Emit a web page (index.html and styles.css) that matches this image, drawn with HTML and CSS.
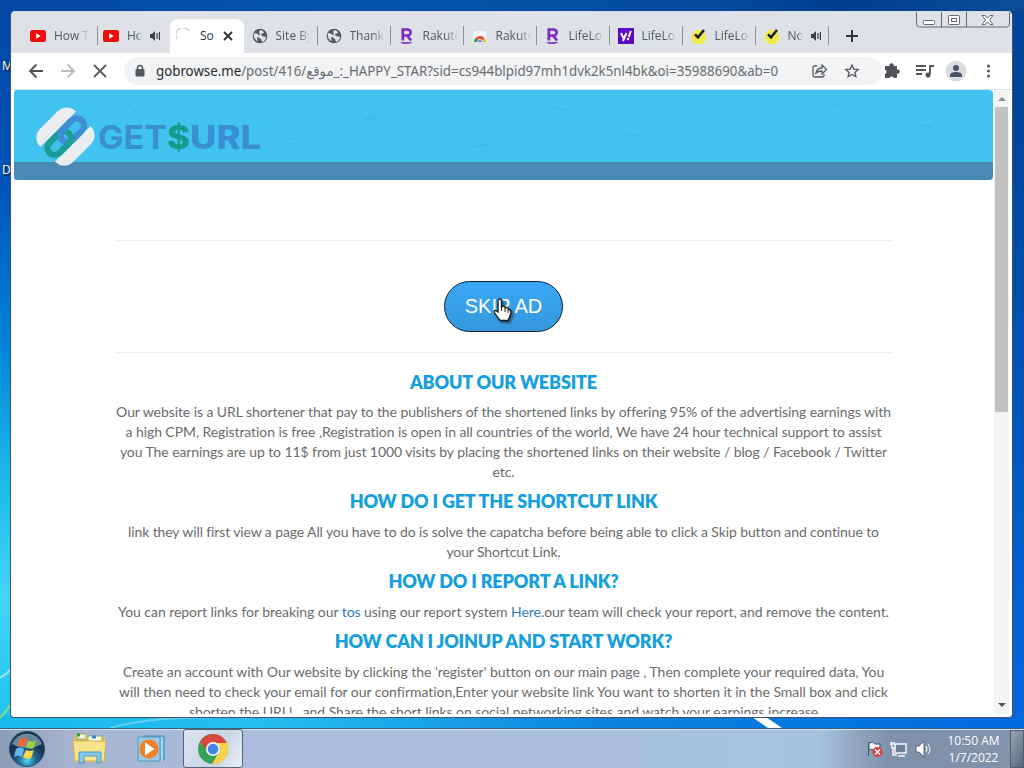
FILE: index.html
```
<!DOCTYPE html>
<html lang="en"><head><meta charset="utf-8"><title>Desktop</title><link rel="stylesheet" href="styles.css"></head>
<body>
<svg class="defs" width="0" height="0"><defs>
<symbol id="yt" viewBox="0 0 16 16"><rect y="2" width="16" height="12" rx="2.5" fill="#f20d0d"/><path d="M6.2 5.3v5.4l4.5-2.7z" fill="#fff"/></symbol>
<symbol id="globe" viewBox="0 0 16 16"><circle cx="8" cy="8" r="7.3" fill="#565a5e"/><path d="M2 5l4 1 1 2-2 2 1 3c-3-1-5-4-4-8zM8 2l3 1 1 2-3 1 1 2 4 1c0 2-2 5-4 5l-1-3-3-2 2-3-1-2z" fill="#dee1e6"/></symbol>
<symbol id="rak" viewBox="0 0 16 16"><path d="M3.8 12.500V1.500h4.700a3 3 0 0 1 .2 6H4m4 0l4 5" fill="none" stroke="#7e28c7" stroke-width="2.700"/><path d="M1 14h13l-4 2H4z" fill="#8b45ce"/></symbol>
<symbol id="store" viewBox="0 0 16 16"><path d="M2 3h12l1 11H1z" fill="#f5f5f5"/><path d="M2 14a6 6 0 0 1 12 0h-3a3 3 0 0 0-6 0z" fill="#e04c40"/><path d="M2 14a6 6 0 0 1 2-4l2 2-1 2z" fill="#34a853"/><path d="M12 10a6 6 0 0 1 2 4h-4z" fill="#fbc02d"/><path d="M6 14a2 2 0 0 1 4 0z" fill="#4285f4"/></symbol>
<symbol id="yahoo" viewBox="0 0 16 16"><path d="M0 0h16v16H0z" fill="#5b0bc5"/><path d="M3 5l2.4 5M8.500 5L5 13M12.800 3l-2 6" fill="none" stroke="#fff" stroke-width="2"/><circle cx="10" cy="11" r="1.200" fill="#fff"/></symbol>
<symbol id="check" viewBox="0 0 16 16"><circle cx="8" cy="9" r="7.300" fill="#f2ea4a"/><path d="M4 6.300l3 3L13 2" fill="none" stroke="#18202a" stroke-width="2.600"/></symbol>
<symbol id="sound" viewBox="0 0 12 12"><path d="M1 4h2l3-3v10L3 8H1z" fill="#3c4043"/><path d="M8 3v6M10.400 2v8" stroke="#3c4043" stroke-width="1.200"/></symbol>
</defs></svg>
<div class="desktop">
<span class="desk-label label-m">M</span><span class="desk-label label-d">D</span>
<svg class="streaks" width="1024" height="728"><path d="M0 678Q7 674 12 668" stroke="#c8f2fa" stroke-width="2" fill="none" opacity=".7"/><path d="M0 718Q6 712 12 702" stroke="#9ce567" stroke-width="2" fill="none" opacity=".75"/><path d="M110 728Q150 716 230 717" stroke="#9fe3ef" stroke-width="2" fill="none" opacity=".5"/><path d="M752 717h14l16 11h-14z" fill="#fff"/></svg>
<main class="window">
<div class="controls"><svg width="94" height="17" fill="none" stroke="#646970"><path d="M.5 0v13q0 3 3 3h87q3 0 3-3V0M25.500 0v16M50.500 0v16"/><g fill="#fff"><rect x="7.500" y="9.500" width="11" height="4" rx="1"/><rect x="32.500" y="4.500" width="11" height="9" rx="1"/><rect x="35.500" y="7.500" width="5" height="3"/><path d="M66 4.500h3l2.500 2.700L74 4.500h3L73.500 9l3.500 4.500h-3l-2.500-2.700-2.500 2.700h-3L69.500 9z"/></g></svg></div>
<nav class="tabs">
<div class="tab"><svg class="fav"><use href="#yt"/></svg><span>How T</span></div>
<div class="tab short before-active"><svg class="fav"><use href="#yt"/></svg><span>Ho</span><svg class="snd"><use href="#sound"/></svg></div>
<div class="tab short active"><svg class="fav" viewBox="0 0 16 16"><path d="M1 11A7.200 7.200 0 0 1 13 3" fill="none" stroke="#ced4dc" stroke-width="1.500"/></svg><span>So</span><svg class="snd" viewBox="0 0 12 12"><path d="M2 2l8 8M10 2l-8 8" stroke="#303338" stroke-width="1.900"/></svg></div>
<div class="tab"><svg class="fav"><use href="#globe"/></svg><span>Site By</span></div>
<div class="tab"><svg class="fav"><use href="#globe"/></svg><span>Thank</span></div>
<div class="tab"><svg class="fav"><use href="#rak"/></svg><span>Rakute</span></div>
<div class="tab"><svg class="fav"><use href="#store"/></svg><span>Rakute</span></div>
<div class="tab"><svg class="fav"><use href="#rak"/></svg><span>LifeLo</span></div>
<div class="tab"><svg class="fav"><use href="#yahoo"/></svg><span>LifeLo</span></div>
<div class="tab"><svg class="fav"><use href="#check"/></svg><span>LifeLo</span></div>
<div class="tab short"><svg class="fav"><use href="#check"/></svg><span>No</span><svg class="snd"><use href="#sound"/></svg></div>
<svg class="plus" width="14" height="14"><path d="M7 1v12M1 7h12" stroke="#303338" stroke-width="2"/></svg>
</nav>
<div class="toolbar">
<svg class="navs" width="112" height="36" fill="none" stroke-width="1.800"><path d="M31 18H18M24.500 11.500L18 18l6.500 6.500" stroke="#4d5156"/><path d="M49 18h13M55.500 11.500L62 18l-6.500 6.500" stroke="#babcbe"/><path d="M82 12l12 12M94 12L82 24" stroke="#55595d"/></svg>
<div class="omnibox">
<svg width="10" height="14"><path d="M2.500 6V4a2.500 2.500 0 0 1 5 0v2" fill="none" stroke="#55595e" stroke-width="1.500"/><rect x=".5" y="5" width="9" height="7.500" rx="1" fill="#55595e"/></svg>
<svg class="url" width="624" height="24"><text x="1" y="17" textLength="622" lengthAdjust="spacingAndGlyphs"><tspan fill="#292b2f">gobrowse.me</tspan>/post/416/موقع_:_HAPPY_STAR?sid=cs944blpid97mh1dvk2k5nl4bk&amp;oi=35988690&amp;ab=0</text></svg>
<svg class="share" width="48" height="18" fill="none" stroke="#55595e" stroke-width="1.300"><path d="M5 4H2.500Q1 4 1 5.500v8Q1 15 2.500 15h8q1.500 0 1.500-1.500V12M4 11q1-5 6-5V3l4.500 4.500L10 12V9q-4 0-6 2z"/><path d="M40 3l1.800 4.100 4.400.4-3.300 2.900 1 4.300-3.900-2.300-3.900 2.300 1-4.300-3.300-2.900 4.400-.4z"/></svg>
</div>
<svg class="actions" width="126" height="36"><path d="M4 13h3.500a2.200 2.200 0 1 1 4.200 0H15v3.500a2.200 2.200 0 1 1 0 4.200V25h-3.300a2.200 2.200 0 0 0-4.200 0H3v-4a2.200 2.200 0 0 0 0-4.200V13z" fill="#505459"/><path d="M34 13h10M34 17h10M34 21h6M48 12v9M48 13h4" stroke="#505459" stroke-width="1.800"/><circle cx="46" cy="22" r="2.500" fill="#505459"/><circle cx="74" cy="18" r="10.500" fill="#dadde2"/><circle cx="74" cy="15" r="3" fill="#4b5367"/><path d="M68 24v-2c0-4 12-4 12 0v2z" fill="#4b5367"/><g fill="#505459"><circle cx="106.500" cy="13" r="1.500"/><circle cx="106.500" cy="18" r="1.500"/><circle cx="106.500" cy="23" r="1.500"/></g></svg>
</div>
<div class="viewport">
<div class="page">
<header class="banner">
<svg width="979" height="90"><g fill="none" stroke="#229fcb" stroke-width="1" opacity=".4"><path d="M113 14l8 5M822 14l8 5M350 30l14-3M540 18l13 2M613 43l14 4M694 26l8-2M270 48l10 1M907 34l11 4M460 57l17-3"/></g>
<g transform="translate(51.500 46.500) rotate(45) scale(1.140)"><rect x="-20.500" y="-22" width="41" height="44" rx="11" fill="#e9edef"/><path d="M-9-23H9v46H-9z" fill="#40bfec"/><rect x="-6" y="-20" width="12.500" height="24" rx="6.250" fill="none" stroke="#3b8fd2" stroke-width="5.500"/><rect x="-6" y="-4" width="12.500" height="24" rx="6.250" fill="none" stroke="#1c9c94" stroke-width="5.500"/><path d="M-6-10v8q0 6 6 6" fill="none" stroke="#3b8fd2" stroke-width="5.500"/></g>
<g class="logo"><text x="84" y="59" textLength="69" lengthAdjust="spacingAndGlyphs">GET</text><text class="dollar" x="153" y="59" textLength="23" lengthAdjust="spacingAndGlyphs">$</text><text class="heavy" x="176" y="59" textLength="71" lengthAdjust="spacingAndGlyphs">URL</text></g></svg>
</header>
<div class="content">
<div class="ad"><button>SKIP AD<svg class="hand" width="19" height="25" viewBox="0 0 19 25"><path d="M5 14V3q0-2 1.800-2T8.500 3v6q3-2 4 1 3-1 3 1.500 2.500 0 2.500 3-1 4-3 8H7Q3 17 1 14q0-3 4 0z" fill="#fff" stroke="#171717" stroke-width="1.300"/><path d="M8.500 9v4M12 10v4M15 12v3" stroke="#222"/></svg></button></div>
<h2>ABOUT OUR WEBSITE</h2>
<p>Our website is a URL shortener that pay to the publishers of the shortened links by offering 95% of the advertising earnings with<br>a high CPM, Registration is free ,Registration is open in all countries of the world, We have 24 hour technical support to assist<br>you The earnings are up to 11$ from just 1000 visits by placing the shortened links on their website / blog / Facebook / Twitter<br>etc.</p>
<h2>HOW DO I GET THE SHORTCUT LINK</h2>
<p class="wide">link they will first view a page All you have to do is solve the capatcha before being able to click a Skip button and continue to<br>your Shortcut Link.</p>
<h2>HOW DO I REPORT A LINK?</h2>
<p class="loose">You can report links for breaking our <a>tos</a> using our report system <a>Here</a>.our team will check your report, and remove the content.</p>
<h2>HOW CAN I JOINUP AND START WORK?</h2>
<p class="loose">Create an account with Our website by clicking the 'register' button on our main page , Then complete your required data, You<br>will then need to check your email for our confirmation,Enter your website link You want to shorten it in the Small box and click<br>shorten the URL! , and Share the short links on social networking sites and watch your earnings increase</p>
</div></div>
<aside class="scrollbar"><i class="up"></i><div class="thumb"></div><i class="down"></i></aside>
</div>
</main>
<footer class="taskbar">
<svg class="start" width="38" height="38" viewBox="0 0 38 38"><defs><radialGradient id="orb" cy=".82"><stop stop-color="#4ed9f2"/><stop offset=".5" stop-color="#236895"/><stop offset="1" stop-color="#15334f"/></radialGradient></defs><circle cx="19" cy="19" r="17.500" fill="url(#orb)" stroke="#24506c"/><path d="M4 14a16 16 0 0 1 30 0Q19 22 4 14z" fill="#a7bfd0" opacity=".6"/><path d="M12 9q4-3 7 0l-2 8q-4-3-8 0z" fill="#ed6937"/><path d="M20 10q4 3 8 0l-2 8q-4 2-8-1z" fill="#9bcf4a"/><path d="M8 19q4-3 8 0l-2 8q-4-3-8 0z" fill="#63b9ed"/><path d="M18 20q4 2 8 0l-3 8q-4 2-8-1z" fill="#ffd447"/></svg>
<svg class="explorer" width="36" height="34"><path d="M2 5V2h8l2 3h21v25H2z" fill="#e3bd58"/><path d="M5 2h9v5H5zM16 4h14v7H16z" fill="#f5f6df" stroke="#9ab36c"/><path d="M1 9h33l-2 20H3z" fill="#f7e48f" stroke="#d4b250"/><path d="M7 31V20h22v11h-4v-7H12v7z" fill="#86c7e7" stroke="#4c98c4"/><path d="M5 3h3" stroke="#2b9c4b" stroke-width="3"/><path d="M20 5h4" stroke="#3b83ca" stroke-width="3"/></svg>
<svg class="media" width="30" height="30"><path d="M7 2h20v24H7z" fill="#73bdde" stroke="#3d8aaf"/><path d="M1 3h22v24H1z" fill="#9dc8e4" stroke="#4f96bd"/><path d="M25 3v24" stroke="#def4ff"/><circle cx="12" cy="15" r="9.500" fill="#ee8127"/><path d="M8 8.500v13l9.500-6.500z" fill="#fff"/></svg>
<div class="task-active"><svg width="32" height="32" viewBox="0 0 32 32"><circle cx="16" cy="16" r="15" fill="#35a456"/><path d="M3 8.500A15 15 0 0 1 29 8.500L30 11H16a6 6 0 0 0-5 8z" fill="#d8483e"/><path d="M16 10h14A15 15 0 0 1 15 31l7-12a6 6 0 0 0-6-9z" fill="#fbd04b"/><circle cx="16" cy="16" r="7" fill="#f5f6fa"/><circle cx="16" cy="16" r="5.300" fill="#4285e8"/></svg></div>
<svg class="tray" width="66" height="20" viewBox="0 0 66 20"><path d="M2.500 3v14M3 4q4-2 6 1h5v7H9q-3-3-6-1z" fill="#eef3f8" stroke="#4a5664"/><circle cx="11.500" cy="13" r="5" fill="#d43e3e"/><path d="M9 10.500l5 5m0-5l-5 5" stroke="#fff" stroke-width="1.500"/><path d="M29 5h11v9H29zM32 17h7M26 3v6h3M25 3v3M28 3v3M27 9v7h4" fill="#6f8094" stroke="#f6f8fa" stroke-width="1.500"/><path d="M50 7h3l5-5v16l-5-5h-3z" fill="#fff" stroke="#566574"/><path d="M60 7q2 3 0 6M62 5q4 5 0 10" fill="none" stroke="#fff"/></svg>
<div class="clock"><div>10:50 AM</div><div>1/7/2022</div></div><div class="show-desktop"></div>
</footer>
</div></body></html>
```
FILE: styles.css
```
*{box-sizing:border-box}
body{margin:0;overflow:hidden;font-family:"Noto Sans","DejaVu Sans",sans-serif}
.defs{position:absolute}
svg{display:block;flex:none}
.desktop{width:1024px;height:768px;position:relative;display:flex;flex-direction:column;padding:11px 0 0 10px;background:linear-gradient(#02479a 0,#024396 12%,#0054b8 50%,#0766db 93%,#0868e2);isolation:isolate}
.desktop:before{content:"";position:absolute;z-index:-1;inset:0;background:linear-gradient(90deg,#0348a3,#0353ad 35%,#034a9c 70%,#003d8e 82%,#0a4f94) 0 0/100% 11px no-repeat,linear-gradient(90deg,#17b8ec,#26bff0 25%,#0982de 60%,#0069df) 0 716px/100% 12px no-repeat,linear-gradient(#0547a5,#0054b7 25%,#0085d8 48%,#22bdec 68%,#43d4f6 82%,#20c0ed) 0 0/12px 728px no-repeat}
.streaks{position:absolute;inset:0;z-index:-1}
.desk-label{position:absolute;left:2px;color:#fff;font-size:12px;line-height:15px;text-shadow:1px 1px 2px #000;z-index:-1}
.label-m{top:58px}.label-d{top:162px}
.window{position:relative;width:1003px;height:707px;flex:none;background:#fff;border:1px solid #3e5470;border-top-color:#d3dce8;border-radius:5px 5px 4px 4px;padding-left:1px;overflow:hidden;margin-bottom:10px}
.controls{position:absolute;right:2px;top:-1px;z-index:2}
.tabs{height:41px;display:flex;align-items:flex-end;background:#dee1e6;padding-left:13px;margin-left:-1px}
.tab{position:relative;width:73.500px;height:34px;padding-left:6px;padding-top:8px;display:flex;gap:8px;flex:none;font-family:"Open Sans",sans-serif;font-size:12px;line-height:18px;color:#55585e}
.tab:nth-child(2){margin-left:-.5px}
.tab:nth-child(3){margin-left:-.5px}
.tab:nth-child(4){padding-left:8px;width:74px}
.tab:nth-child(n+5){padding-left:8px;width:73px}
.tab:after{content:"";position:absolute;right:0;top:7px;height:19px;width:1px;background:#8d9095}
.fav{width:16px;height:16px;margin-top:1px}
.tab span{width:35px;overflow:hidden;white-space:nowrap;-webkit-mask:linear-gradient(90deg,#000 65%,transparent)}
.tab.short span{width:15px}
.snd{width:12px;height:12px;margin:3px 0 0 -1px}
.before-active:after,.active:after{display:none}
.active{background:#fff;border-radius:8px 8px 0 0;color:#303338}
.tab.active span{-webkit-mask:none}
.plus{margin:0 0 10px 16px}
.toolbar{height:37px;display:flex;align-items:center;border-bottom:1px solid #d2e6ef}
.omnibox{width:758px;height:28px;border-radius:14px;background:#f1f3f4;display:flex;align-items:center;padding-left:11px}
.omnibox>svg:first-child{margin:0 10px 0 0}
.url{font-size:14px;fill:#696c70}
.share{margin:0 8px 0 33px}
.viewport{height:624px;margin-left:2px;display:flex;overflow:hidden}
.page{width:980px;flex:none}
.banner{width:979px;height:90px;border-radius:3px 4px 4px 3px;background:linear-gradient(#40c3ef 72px,#4b89b5 72px)}
.logo{font:700 32px Inter,sans-serif;fill:#398fd0}
.dollar{fill:#169b8b;font-weight:800}
.heavy{font-weight:800}
.content{width:777px;margin:60px auto 0 101px;color:#6b6b6b;font-family:Lato,sans-serif;text-align:center}
.ad{height:113px;border-top:1px solid #ededed;border-bottom:1px solid #ededed;display:flex;justify-content:center;padding-top:40px;margin-bottom:17px}
button{position:relative;width:119px;height:51px;border:1px solid #101e30;border-radius:26px;background:linear-gradient(#3aa8f7,#3498db);color:#fff;font:20px "Liberation Sans",Arial,sans-serif;padding:0}
.hand{position:absolute;left:48px;top:16px;filter:drop-shadow(2px 2px 1px #24577d)}
h2{margin:0;height:24px;font-size:18px;line-height:24px;color:#169fdf;font-weight:800;letter-spacing:-.18px;white-space:nowrap}
p{margin:8px -10px 7px;font-size:14px;line-height:20px;letter-spacing:-.08px;white-space:nowrap}
h2:nth-of-type(n+2){margin-bottom:9px}
.wide{letter-spacing:-.115px}
.loose{letter-spacing:-.055px}
p a{color:#337ab7}
.scrollbar{width:15px;background:#f4f4f4;display:flex;flex-direction:column;align-items:center}
.thumb{width:13px;height:305px;background:#c1c1c1;flex:none}
.up,.down{width:0;height:0;border:4px solid transparent}
.up{border-bottom-color:#8d8d8d;margin:3px 0 6px}
.down{border-top-color:#505050;margin:auto 0 3px}
.taskbar{height:40px;flex:none;width:1024px;margin-left:-10px;display:flex;align-items:center;border-top:1px solid #36627d;box-shadow:inset 0 1px #d3e5f2;background:linear-gradient(90deg,#8d9cb5 0,#a5b5d1 7%,#aabddc 25%,#a7c2df 80%,#8da2bc 84%,#7d91aa 87%,#8194ab)}
.start{margin-left:8px}.explorer{margin-left:26px}.media{margin-left:29px}
.task-active{width:60px;height:39px;border:1px solid #53657b;border-radius:3px;background:linear-gradient(120deg,#dce5f1,#c8d4e4 60%,#ecf1f8);display:flex;align-items:center;justify-content:center;margin-left:16px}
.tray{margin-left:623px}
.clock{color:#fff;font:12px/17px "Open Sans",sans-serif;width:67px;text-align:center;margin-left:8px;margin-top:1px;white-space:nowrap}
.show-desktop{width:14px;height:38px;margin-left:auto;background:linear-gradient(120deg,#96a4b3,#566a7d);border:1px solid #4f5e6f}
```
